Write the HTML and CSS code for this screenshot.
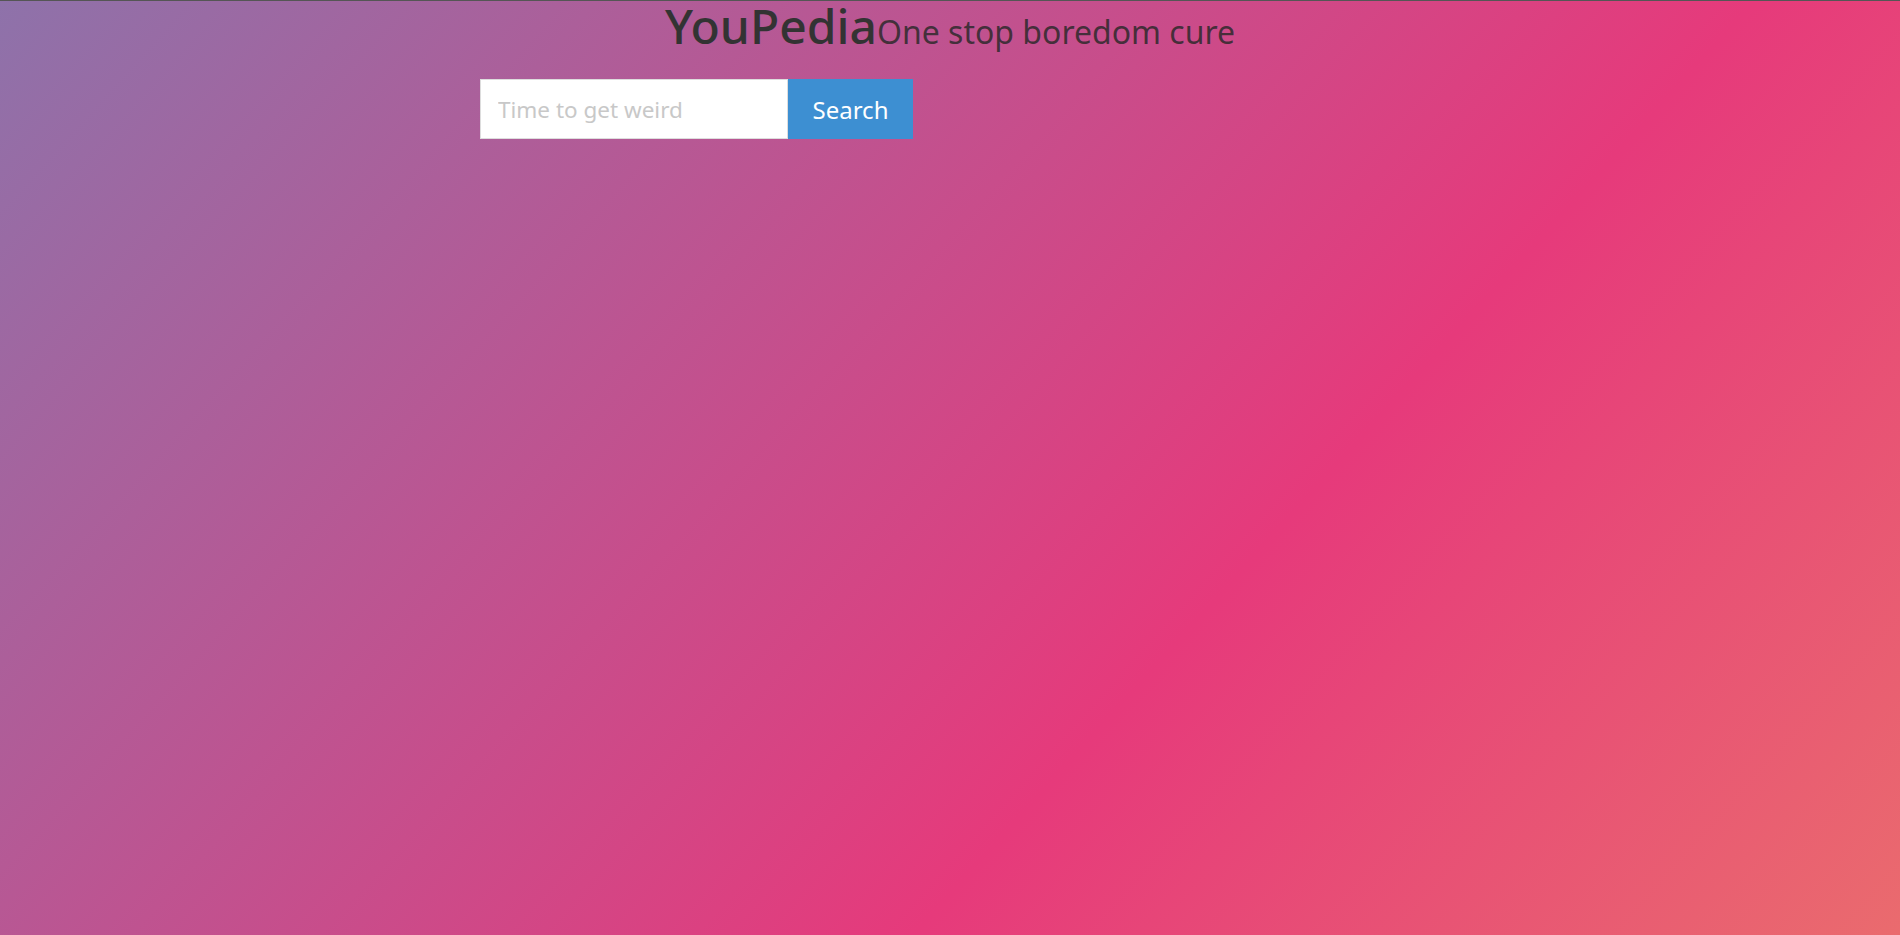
FILE: index.html
```html
<!DOCTYPE html>
<html lang="en">
<head>
<meta charset="utf-8">
<title>YouPedia</title>
<link rel="stylesheet" href="styles.css">
</head>
<body>
<header class="masthead">
  <h1 class="brand">YouPedia</h1><span class="tagline">One stop boredom cure</span>
</header>
<form class="search">
  <input class="search-input" type="text" placeholder="Time to get weird">
  <button class="search-btn" type="button">Search</button>
</form>
</body>
</html>
```
FILE: styles.css
```css
html, body {
  margin: 0;
  padding: 0;
  height: 100%;
}
body {
  border-top: 1px solid #555;
  box-sizing: border-box;
  font-family: "Noto Sans", "Open Sans", sans-serif;
  background: linear-gradient(132deg, #8e72aa 0%, #e63a7b 64%, #ea6b6e 100%);
  overflow: hidden;
}
.masthead {
  display: flex;
  justify-content: center;
  align-items: baseline;
  padding-top: 1px;
  white-space: nowrap;
}
.brand {
  margin: 0;
  font-size: 48px;
  line-height: 1;
  font-weight: 500;
  color: #333;
}
.tagline {
  font-size: 32px;
  line-height: 1;
  color: rgba(40, 40, 40, 0.82);
}
.search {
  display: flex;
  margin: 29px 0 0 480px;
  height: 60px;
}
.search-input {
  box-sizing: border-box;
  width: 308px;
  height: 60px;
  margin: 0;
  padding: 0 17px;
  border: 1px solid #ddd;
  font-family: inherit;
  font-size: 22.5px;
  color: #333;
  outline: none;
}
.search-input::placeholder {
  color: #c8c8c8;
}
.search-btn {
  box-sizing: border-box;
  width: 125px;
  height: 60px;
  margin: 0;
  border: none;
  background: #3d8fd2;
  color: #fff;
  font-family: inherit;
  font-size: 24px;
  padding: 0;
}
```
